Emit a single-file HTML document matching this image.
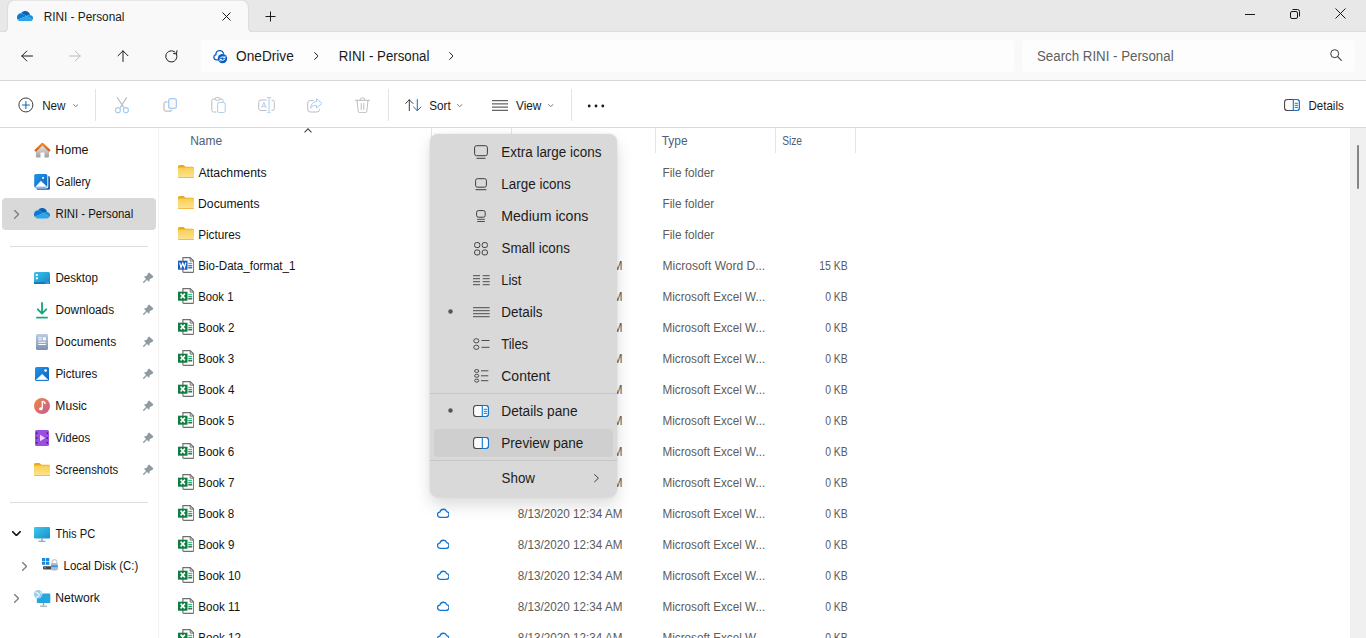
<!DOCTYPE html>
<html lang="en"><head><meta charset="utf-8"><title>RINI - Personal</title>
<style>
html,body{margin:0;padding:0;}
body{width:1366px;height:638px;overflow:hidden;position:relative;background:#fff;font-family:"Liberation Sans", sans-serif;}
#app{position:absolute;left:0;top:0;width:1366px;height:638px;overflow:hidden;}
#app div,#app svg,#app span{position:absolute;display:block;}
#app span{white-space:pre;line-height:20px;height:20px;transform-origin:0 50%;}
</style></head><body><div id="app">
<div style="left:0px;top:0px;width:1366px;height:32px;background:#e8e8e8;"></div>
<div style="left:0px;top:31px;width:1366px;height:1px;background:#dddddd;"></div>
<div style="left:0px;top:32px;width:1366px;height:48px;background:#f9f9f9;"></div>
<div style="left:0px;top:80px;width:1366px;height:1px;background:#d6d6d6;"></div>
<div style="left:0px;top:81px;width:1366px;height:46px;background:#ffffff;"></div>
<div style="left:0px;top:127px;width:1366px;height:1px;background:#d9d9d9;"></div>
<svg style="left:0px;top:0px;" width="260" height="32" viewBox="0 0 260 32" preserveAspectRatio="none" fill="none"><path d="M4 32Q8 32 8 28L8 8Q8 0.500 16 0.500L240 0.500Q248 0.500 248 8L248 28Q248 32 252 32Z" fill="#f9f9f9"/><path d="M3.500 31.500Q7.500 31.500 7.500 27.500L7.500 8Q7.500 0 16 0L240 0Q248.500 0 248.500 8L248.500 27.500Q248.500 31.500 252.500 31.500" stroke="#dddddd" stroke-width="1" fill="none"/></svg>
<div style="left:201px;top:40px;width:813px;height:32px;background:#fdfdfd;border-radius:4px;"></div>
<div style="left:1022px;top:40px;width:333px;height:32px;background:#fdfdfd;border-radius:4px;"></div>
<div style="left:158px;top:128px;width:1px;height:510px;background:#f3f3f3;"></div>
<div style="left:1350px;top:128px;width:16px;height:510px;background:#f0f0f0;"></div>
<div style="left:1357px;top:145px;width:2px;height:44px;background:#858585;border-radius:1px;"></div>
<svg style="left:17px;top:10.6px;" width="16" height="10.6" viewBox="0 5.5 32 20.5" preserveAspectRatio="none" fill="none"><path d="M12.202 11.193l6.719 4.024 4.003-1.685A6.477 6.477 0 0125.5 13c.148 0 .294.007.439.016a10 10 0 00-18.041-3.013L8 10a7.960 7.960 0 014.202 1.193z" fill="#0364b8"/>
<path d="M12.203 11.192A7.960 7.960 0 008 10l-.102.003a7.997 7.997 0 00-6.460 12.570L7.360 20.080l2.634-1.108 5.863-2.468 3.062-1.288z" fill="#0f78d4"/>
<path d="M25.939 13.016A6.577 6.577 0 0025.500 13a6.477 6.477 0 00-2.576.532l-4.003 1.684 1.161.695 3.805 2.279 1.660.994 5.677 3.400a6.500 6.500 0 00-5.285-9.568z" fill="#1490df"/>
<path d="M25.546 19.184l-1.660-.994-3.805-2.280-1.160-.694-3.063 1.288-5.863 2.468L7.360 20.080l-5.924 2.493A7.989 7.989 0 008 26h17.500a6.498 6.498 0 005.723-3.416z" fill="#28a8ea"/></svg>
<span style="left:43px;top:6.75px;font-size:12px;color:#1a1a1a;transform:translateX(0.63px) scaleX(0.9857);opacity:.999;">RINI - Personal</span>
<svg style="left:222px;top:12px;" width="9" height="9" viewBox="0 0 9 9" preserveAspectRatio="none" fill="none"><path d="M0.5 0.5L8.5 8.5M8.5 0.5L0.5 8.5" stroke="#1a1a1a" stroke-width="1"/></svg>
<svg style="left:265px;top:11px;" width="11" height="11" viewBox="0 0 11 11" preserveAspectRatio="none" fill="none"><path d="M5.5 0.5V10.500M0.500 5.500H10.500" stroke="#1a1a1a" stroke-width="1"/></svg>
<div style="left:1245px;top:14px;width:10px;height:1px;background:#1a1a1a;"></div>
<svg style="left:1290px;top:9px;" width="10" height="10" viewBox="0 0 10 10" preserveAspectRatio="none" fill="none"><rect x="0.5" y="2.500" width="7" height="7" rx="1.500" stroke="#1a1a1a"/><path d="M2.500 0.500H7.500A2 2 0 0 1 9.500 2.500V7.500" stroke="#1a1a1a"/></svg>
<svg style="left:1335px;top:7.8px;" width="11" height="11" viewBox="0 0 11 11" preserveAspectRatio="none" fill="none"><path d="M0.500 0.500L10.500 10.500M10.500 0.500L0.500 10.500" stroke="#1a1a1a" stroke-width="1"/></svg>
<svg style="left:21px;top:50px;" width="12" height="12" viewBox="0 0 12 12" preserveAspectRatio="none" fill="none"><path d="M11.500 6H0.800M5.800 1L0.800 6L5.800 11" stroke="#1a1a1a" stroke-width="1" stroke-linecap="round" stroke-linejoin="round"/></svg>
<svg style="left:69px;top:50px;" width="12" height="12" viewBox="0 0 12 12" preserveAspectRatio="none" fill="none"><path d="M0.500 6H11.200M6.200 1L11.200 6L6.200 11" stroke="#bcbcbc" stroke-width="1" stroke-linecap="round" stroke-linejoin="round"/></svg>
<svg style="left:116.5px;top:50px;" width="12" height="12" viewBox="0 0 12 12" preserveAspectRatio="none" fill="none"><path d="M6 11.500V0.800M1 5.800L6 0.800L11 5.800" stroke="#1a1a1a" stroke-width="1" stroke-linecap="round" stroke-linejoin="round"/></svg>
<svg style="left:164.5px;top:49.5px;" width="13" height="13" viewBox="0 0 13 13" preserveAspectRatio="none" fill="none"><path d="M11.400 3.900A5.600 5.600 0 1 1 10 2.100" stroke="#1a1a1a" stroke-width="1" stroke-linecap="round"/><path d="M12 0.700L11.500 3.900L8.500 3.600" stroke="#1a1a1a" stroke-width="1" stroke-linecap="round" stroke-linejoin="round"/></svg>
<svg style="left:213px;top:49.5px;" width="15" height="14" viewBox="0 0 15 14" preserveAspectRatio="none" fill="none"><path d="M4.600 9.900H3.400A2.700 2.700 0 0 1 2.900 4.600A3.900 3.900 0 0 1 10.500 3.300" stroke="#0f5fc0" stroke-width="1.300" stroke-linecap="round"/>
<circle cx="9.500" cy="8.600" r="4.700" fill="#0a5cc0"/>
<path d="M7 8.200C8 6.600 10.300 6.300 11.700 7.600M12 9C11 10.600 8.700 10.900 7.300 9.600" stroke="#fff" stroke-width="1" stroke-linecap="round"/><path d="M12 6.200V7.800H10.400M7 11V9.400H8.600" stroke="#fff" stroke-width="0.900" stroke-linecap="round" stroke-linejoin="round"/></svg>
<span style="left:236px;top:45.75px;font-size:14px;color:#1a1a1a;transform:translateX(0.05px) scaleX(0.9766);opacity:.999;">OneDrive</span>
<svg style="left:313.7px;top:52.2px;" width="4.8" height="8" viewBox="0 0 4.8 8" preserveAspectRatio="none" fill="none"><path d="M0.600 0.600L4.2 4.0L0.600 7.4" stroke="#1a1a1a" stroke-width="1" stroke-linecap="round" stroke-linejoin="round"/></svg>
<span style="left:338px;top:45.75px;font-size:14px;color:#1a1a1a;transform:translateX(0.71px) scaleX(0.9475);opacity:.999;">RINI - Personal</span>
<svg style="left:448.7px;top:52.2px;" width="4.8" height="8" viewBox="0 0 4.8 8" preserveAspectRatio="none" fill="none"><path d="M0.600 0.600L4.2 4.0L0.600 7.4" stroke="#1a1a1a" stroke-width="1" stroke-linecap="round" stroke-linejoin="round"/></svg>
<span style="left:1036px;top:46.00px;font-size:14px;color:#5f5f5f;transform:translateX(1.00px) scaleX(0.9489);opacity:.999;">Search RINI - Personal</span>
<svg style="left:1330px;top:49.4px;" width="12" height="12" viewBox="0 0 12 12" preserveAspectRatio="none" fill="none"><circle cx="4.700" cy="4.700" r="4" stroke="#3a3a3a" stroke-width="1"/><path d="M7.700 7.700L11.300 11.300" stroke="#3a3a3a" stroke-width="1.100" stroke-linecap="round"/></svg>
<svg style="left:17.5px;top:96.5px;" width="16" height="16" viewBox="0 0 16 16" preserveAspectRatio="none" fill="none"><circle cx="7.900" cy="7.950" r="7" stroke="#3d3d3d" stroke-width="1"/><path d="M7.900 4.500V11.400M4.450 7.950H11.350" stroke="#0f6cbd" stroke-width="1.100" stroke-linecap="round"/></svg>
<span style="left:42px;top:95.75px;font-size:12px;color:#1a1a1a;transform:translateX(0.14px) scaleX(0.9714);opacity:.999;">New</span>
<svg style="left:72.5px;top:103.6px;" width="5.6" height="3.2" viewBox="0 0 5.6 3.2" preserveAspectRatio="none" fill="none"><path d="M0.600 0.600L2.8 2.6L5.0 0.600" stroke="#6a6a6a" stroke-width="0.9" stroke-linecap="round" stroke-linejoin="round"/></svg>
<div style="left:95px;top:89px;width:1px;height:31.5px;background:#e3e3e3;"></div>
<svg style="left:115px;top:96.5px;" width="14" height="17" viewBox="0 0 14 17" preserveAspectRatio="none" fill="none"><path d="M2.100 0.400L9.100 10.900M11.700 0.400L5.100 10.900" stroke="#bdbdbd" stroke-width="1.100"/><circle cx="2.900" cy="13.200" r="2.500" stroke="#a6cdf0" stroke-width="1.200"/><circle cx="10.900" cy="13.200" r="2.500" stroke="#a6cdf0" stroke-width="1.200"/></svg>
<svg style="left:163px;top:98px;" width="14" height="14" viewBox="0 0 14 14" preserveAspectRatio="none" fill="none"><path d="M4.500 3.800H3.200A2.200 2.200 0 0 0 1 6V11A2.200 2.200 0 0 0 3.200 13.200H7A2.200 2.200 0 0 0 9 11.800" stroke="#bdbdbd" stroke-width="1.200"/><rect x="5.700" y="0.700" width="7.700" height="9.700" rx="2" fill="#f8f8f8" stroke="#a6cdf0" stroke-width="1.300"/></svg>
<svg style="left:210.5px;top:96.5px;" width="15" height="16.5" viewBox="0 0 15 16.5" preserveAspectRatio="none" fill="none"><path d="M5.500 15H2.500A1.700 1.700 0 0 1 0.800 13.300V3.700A1.700 1.700 0 0 1 2.500 2H4M9 2H10.500A1.700 1.700 0 0 1 12.200 3.700V4.800" stroke="#bdbdbd" stroke-width="1"/><rect x="4" y="0.600" width="5" height="2.600" rx="1.200" stroke="#bdbdbd" stroke-width="1"/><rect x="6.600" y="5.500" width="7.600" height="10" rx="1.700" stroke="#a6cdf0" stroke-width="1"/></svg>
<svg style="left:257.5px;top:96.5px;" width="17" height="16.5" viewBox="0 0 17 16.5" preserveAspectRatio="none" fill="none"><path d="M8.500 3H3A2.300 2.300 0 0 0 0.700 5.300V11.200A2.300 2.300 0 0 0 3 13.500H8.500M13.500 3H14A2.300 2.300 0 0 1 16.300 5.300V11.200A2.300 2.300 0 0 1 14 13.500H13.500" stroke="#bdbdbd" stroke-width="1"/><path d="M11 0.800V15.700M9 0.600H13M9 15.900H13" stroke="#a6cdf0" stroke-width="1"/><path d="M3.600 11L5.900 5.300L8.200 11M4.400 9.200H7.400" stroke="#a6cdf0" stroke-width="0.900" stroke-linejoin="round"/></svg>
<svg style="left:306.5px;top:97.5px;" width="16" height="15" viewBox="0 0 16 15" preserveAspectRatio="none" fill="none"><path d="M6.500 2.500H3.200A2.500 2.500 0 0 0 0.700 5V11.500A2.500 2.500 0 0 0 3.200 14H10A2.500 2.500 0 0 0 12.500 11.500V11" stroke="#bdbdbd" stroke-width="1"/><path d="M9.500 0.800L15 5.400L9.500 10V7.400C6.500 7.200 4.800 8.200 3.600 10.200C3.800 6.500 5.800 3.900 9.500 3.500Z" stroke="#a6cdf0" stroke-width="1" stroke-linejoin="round"/></svg>
<svg style="left:354.5px;top:96.5px;" width="15" height="16.5" viewBox="0 0 15 16.5" preserveAspectRatio="none" fill="none"><path d="M0.500 3.300H14.500M5 3.300A2.500 2.500 0 0 1 10 3.300M2 3.300L3.200 14.200A1.700 1.700 0 0 0 4.900 15.700H10.100A1.700 1.700 0 0 0 11.800 14.200L13 3.300M6.200 6.500V12.500M8.800 6.500V12.500" stroke="#bdbdbd" stroke-width="1" stroke-linecap="round"/></svg>
<div style="left:388px;top:89px;width:1px;height:31.5px;background:#e3e3e3;"></div>
<svg style="left:404.5px;top:98.5px;" width="17" height="12.5" viewBox="0 0 17 12.5" preserveAspectRatio="none" fill="none"><path d="M4.300 12V0.800M0.600 4.500L4.300 0.800L8 4.500" stroke="#3d3d3d" stroke-width="1" stroke-linecap="round" stroke-linejoin="round"/><path d="M12.300 0.500V11.700M8.600 8L12.300 11.700L16 8" stroke="#0f6cbd" stroke-width="1" stroke-linecap="round" stroke-linejoin="round"/></svg>
<span style="left:429px;top:95.50px;font-size:12px;color:#1a1a1a;transform:translateX(0.17px) scaleX(0.9774);opacity:.999;">Sort</span>
<svg style="left:457px;top:103.6px;" width="5.6" height="3.2" viewBox="0 0 5.6 3.2" preserveAspectRatio="none" fill="none"><path d="M0.600 0.600L2.8 2.6L5.0 0.600" stroke="#6a6a6a" stroke-width="0.9" stroke-linecap="round" stroke-linejoin="round"/></svg>
<svg style="left:492px;top:99.5px;" width="16" height="11" viewBox="0 0 16 11" preserveAspectRatio="none" fill="none"><path d="M0 0.700H16M0 3.900H16M0 7.100H16M0 10.300H16" stroke="#3d3d3d" stroke-width="1"/></svg>
<span style="left:516px;top:95.50px;font-size:12px;color:#1a1a1a;transform:translateX(0.05px) scaleX(0.9816);opacity:.999;">View</span>
<svg style="left:548px;top:103.6px;" width="5.6" height="3.2" viewBox="0 0 5.6 3.2" preserveAspectRatio="none" fill="none"><path d="M0.600 0.600L2.8 2.6L5.0 0.600" stroke="#6a6a6a" stroke-width="0.9" stroke-linecap="round" stroke-linejoin="round"/></svg>
<div style="left:571px;top:89px;width:1px;height:31.5px;background:#e3e3e3;"></div>
<svg style="left:587px;top:104px;" width="18" height="4" viewBox="0 0 18 4" preserveAspectRatio="none" fill="none"><circle cx="2.200" cy="2" r="1.400" fill="#1a1a1a"/><circle cx="9" cy="2" r="1.400" fill="#1a1a1a"/><circle cx="15.800" cy="2" r="1.400" fill="#1a1a1a"/></svg>
<svg style="left:1284px;top:99px;" width="16" height="12" viewBox="0 0 16 12" preserveAspectRatio="none" fill="none"><rect x="0.550" y="0.550" width="14.900" height="10.900" rx="2.800" fill="#fbfbfb" stroke="#4a4a4a" stroke-width="1.100"/><path d="M9.300 0.550H12.650A2.800 2.800 0 0 1 15.450 3.350V8.650A2.800 2.800 0 0 1 12.650 11.450H9.300Z" fill="#fdfdfd" stroke="#0f78d4" stroke-width="1.100"/><path d="M11.100 4.300H13.900M11.100 6.350H13.900M11.100 8.400H13.900" stroke="#0f78d4" stroke-width="0.950" stroke-linecap="round"/></svg>
<span style="left:1308px;top:96.00px;font-size:12px;color:#1a1a1a;transform:translateX(0.45px) scaleX(0.9612);opacity:.999;">Details</span>
<div style="left:2px;top:198px;width:154px;height:32px;background:#d9d9d9;border-radius:4px;"></div>
<div style="left:10px;top:246px;width:138px;height:1px;background:#dcdcdc;"></div>
<div style="left:10px;top:502px;width:138px;height:1px;background:#dcdcdc;"></div>
<span style="left:55px;top:139.75px;font-size:12px;color:#141414;transform:translateX(0.33px) scaleX(1.0378);">Home</span>
<span style="left:55px;top:171.75px;font-size:12px;color:#141414;transform:translateX(0.80px) scaleX(0.9161);">Gallery</span>
<span style="left:55px;top:203.75px;font-size:12px;color:#141414;transform:translateX(0.42px) scaleX(0.9477);">RINI - Personal</span>
<span style="left:55px;top:267.75px;font-size:12px;color:#141414;transform:translateX(0.40px) scaleX(0.9649);">Desktop</span>
<span style="left:55px;top:299.75px;font-size:12px;color:#141414;transform:translateX(0.38px) scaleX(0.9895);">Downloads</span>
<span style="left:55px;top:331.75px;font-size:12px;color:#141414;transform:translateX(0.36px) scaleX(1.0028);">Documents</span>
<span style="left:55px;top:363.75px;font-size:12px;color:#141414;transform:translateX(0.40px) scaleX(0.9644);">Pictures</span>
<span style="left:55px;top:395.75px;font-size:12px;color:#141414;transform:translateX(0.36px) scaleX(1.0069);">Music</span>
<span style="left:55px;top:427.75px;font-size:12px;color:#141414;transform:translateX(0.35px) scaleX(0.9528);">Videos</span>
<span style="left:55px;top:459.75px;font-size:12px;color:#141414;transform:translateX(0.24px) scaleX(0.9441);">Screenshots</span>
<span style="left:55px;top:523.75px;font-size:12px;color:#141414;transform:translateX(0.45px) scaleX(0.9318);">This PC</span>
<span style="left:63px;top:555.75px;font-size:12px;color:#141414;transform:translateX(0.62px) scaleX(0.9492);">Local Disk (C:)</span>
<span style="left:55px;top:587.75px;font-size:12px;color:#141414;transform:translateX(0.35px) scaleX(1.0116);">Network</span>
<svg style="left:14px;top:210.3px;" width="5.2" height="8.8" viewBox="0 0 5.2 8.8" preserveAspectRatio="none" fill="none"><path d="M0.600 0.600L4.6000000000000005 4.4L0.600 8.200000000000001" stroke="#808080" stroke-width="1.4" stroke-linecap="round" stroke-linejoin="round"/></svg>
<svg style="left:12.2px;top:531px;" width="8.8" height="5.2" viewBox="0 0 8.8 5.2" preserveAspectRatio="none" fill="none"><path d="M0.600 0.600L4.4 4.6000000000000005L8.200000000000001 0.600" stroke="#1a1a1a" stroke-width="1.6" stroke-linecap="round" stroke-linejoin="round"/></svg>
<svg style="left:22px;top:562.2px;" width="5.2" height="8.8" viewBox="0 0 5.2 8.8" preserveAspectRatio="none" fill="none"><path d="M0.600 0.600L4.6000000000000005 4.4L0.600 8.200000000000001" stroke="#808080" stroke-width="1.4" stroke-linecap="round" stroke-linejoin="round"/></svg>
<svg style="left:14px;top:593.8px;" width="5.2" height="8.8" viewBox="0 0 5.2 8.8" preserveAspectRatio="none" fill="none"><path d="M0.600 0.600L4.6000000000000005 4.4L0.600 8.200000000000001" stroke="#808080" stroke-width="1.4" stroke-linecap="round" stroke-linejoin="round"/></svg>
<svg style="left:142.5px;top:271.75px;" width="11" height="11" viewBox="0 0 11 11" preserveAspectRatio="none" fill="none"><path d="M6.200 0.500L10.500 4.600L9.200 5.900L6.900 7L6 9.900L0.900 4.800L3.900 3.700L4.900 1.600Z" fill="#8f9aa2"/><path d="M3.700 7.300L0.700 10.300" stroke="#8f9aa2" stroke-width="1.300" stroke-linecap="round"/></svg>
<svg style="left:142.5px;top:303.75px;" width="11" height="11" viewBox="0 0 11 11" preserveAspectRatio="none" fill="none"><path d="M6.200 0.500L10.500 4.600L9.200 5.900L6.900 7L6 9.900L0.900 4.800L3.900 3.700L4.900 1.600Z" fill="#8f9aa2"/><path d="M3.700 7.300L0.700 10.300" stroke="#8f9aa2" stroke-width="1.300" stroke-linecap="round"/></svg>
<svg style="left:142.5px;top:335.75px;" width="11" height="11" viewBox="0 0 11 11" preserveAspectRatio="none" fill="none"><path d="M6.200 0.500L10.500 4.600L9.200 5.900L6.900 7L6 9.900L0.900 4.800L3.900 3.700L4.900 1.600Z" fill="#8f9aa2"/><path d="M3.700 7.300L0.700 10.300" stroke="#8f9aa2" stroke-width="1.300" stroke-linecap="round"/></svg>
<svg style="left:142.5px;top:367.75px;" width="11" height="11" viewBox="0 0 11 11" preserveAspectRatio="none" fill="none"><path d="M6.200 0.500L10.500 4.600L9.200 5.900L6.900 7L6 9.900L0.900 4.800L3.900 3.700L4.900 1.600Z" fill="#8f9aa2"/><path d="M3.700 7.300L0.700 10.300" stroke="#8f9aa2" stroke-width="1.300" stroke-linecap="round"/></svg>
<svg style="left:142.5px;top:399.75px;" width="11" height="11" viewBox="0 0 11 11" preserveAspectRatio="none" fill="none"><path d="M6.200 0.500L10.500 4.600L9.200 5.900L6.900 7L6 9.900L0.900 4.800L3.900 3.700L4.900 1.600Z" fill="#8f9aa2"/><path d="M3.700 7.300L0.700 10.300" stroke="#8f9aa2" stroke-width="1.300" stroke-linecap="round"/></svg>
<svg style="left:142.5px;top:431.75px;" width="11" height="11" viewBox="0 0 11 11" preserveAspectRatio="none" fill="none"><path d="M6.200 0.500L10.500 4.600L9.200 5.900L6.900 7L6 9.900L0.900 4.800L3.900 3.700L4.900 1.600Z" fill="#8f9aa2"/><path d="M3.700 7.300L0.700 10.300" stroke="#8f9aa2" stroke-width="1.300" stroke-linecap="round"/></svg>
<svg style="left:142.5px;top:463.75px;" width="11" height="11" viewBox="0 0 11 11" preserveAspectRatio="none" fill="none"><path d="M6.200 0.500L10.500 4.600L9.200 5.900L6.900 7L6 9.900L0.900 4.800L3.900 3.700L4.900 1.600Z" fill="#8f9aa2"/><path d="M3.700 7.300L0.700 10.300" stroke="#8f9aa2" stroke-width="1.300" stroke-linecap="round"/></svg>
<svg style="left:33.5px;top:142.3px;" width="17" height="16" viewBox="0 0 17 16" preserveAspectRatio="none" fill="none"><defs><linearGradient id="hg" x1="0" y1="0" x2="0" y2="1"><stop offset="0" stop-color="#ececec"/><stop offset="1" stop-color="#9f9f9f"/></linearGradient><linearGradient id="hr" x1="0" y1="0" x2="0" y2="1"><stop offset="0" stop-color="#f08a2a"/><stop offset="1" stop-color="#d9601a"/></linearGradient></defs><path d="M1.900 8.500L8.450 2.500L15 8.500V14.400A1 1 0 0 1 14 15.400H10.500V10.500H6.500V15.400H2.900A1 1 0 0 1 1.900 14.400Z" fill="url(#hg)"/><path d="M1.700 8.400L8.450 1.900L15.200 8.400" stroke="url(#hr)" stroke-width="2.300" stroke-linecap="round" stroke-linejoin="round"/></svg>
<svg style="left:33.8px;top:174px;" width="16" height="16" viewBox="0 0 16 16" preserveAspectRatio="none" fill="none"><defs><linearGradient id="gg" x1="0" y1="0" x2="1" y2="1"><stop offset="0" stop-color="#2196e8"/><stop offset="1" stop-color="#0e66c6"/></linearGradient></defs><rect x="2.300" y="1.900" width="13.650" height="13.850" rx="1.600" fill="#1259b3"/><rect x="0.200" y="0" width="14.100" height="14.600" rx="1.800" fill="#f4f9fe"/><rect x="0.200" y="0" width="13.100" height="13.600" rx="1.600" fill="url(#gg)"/><rect x="8.200" y="3" width="1.800" height="1.800" rx="0.300" fill="#fff"/><path d="M6.900 7L13 12.700H1.700Z" fill="#fff" stroke="#fff" stroke-width="0.300" stroke-linejoin="round"/></svg>
<svg style="left:33.9px;top:208.4px;" width="16" height="10.6" viewBox="0 5.5 32 20.5" preserveAspectRatio="none" fill="none"><path d="M12.202 11.193l6.719 4.024 4.003-1.685A6.477 6.477 0 0125.5 13c.148 0 .294.007.439.016a10 10 0 00-18.041-3.013L8 10a7.960 7.960 0 014.202 1.193z" fill="#0364b8"/>
<path d="M12.203 11.192A7.960 7.960 0 008 10l-.102.003a7.997 7.997 0 00-6.460 12.570L7.360 20.080l2.634-1.108 5.863-2.468 3.062-1.288z" fill="#0f78d4"/>
<path d="M25.939 13.016A6.577 6.577 0 0025.500 13a6.477 6.477 0 00-2.576.532l-4.003 1.684 1.161.695 3.805 2.279 1.660.994 5.677 3.400a6.500 6.500 0 00-5.285-9.568z" fill="#1490df"/>
<path d="M25.546 19.184l-1.660-.994-3.805-2.280-1.160-.694-3.063 1.288-5.863 2.468L7.360 20.080l-5.924 2.493A7.989 7.989 0 008 26h17.500a6.498 6.498 0 005.723-3.416z" fill="#28a8ea"/></svg>
<svg style="left:34px;top:272px;" width="16" height="12" viewBox="0 0 16 12" preserveAspectRatio="none" fill="none"><defs><linearGradient id="dg" x1="0" y1="0" x2="1" y2="1"><stop offset="0" stop-color="#3bc4e8"/><stop offset="1" stop-color="#1583c9"/></linearGradient></defs><rect x="0" y="0" width="16" height="12" rx="1.500" fill="url(#dg)"/><rect x="0" y="10.300" width="16" height="1.700" fill="#1173b8"/><rect x="1.800" y="2" width="2" height="2" fill="#fff"/><rect x="1.800" y="5.300" width="2" height="2" fill="#fff"/><path d="M11.500 11H15" stroke="#fff" stroke-width="0.800" stroke-dasharray="0.800 0.600"/></svg>
<svg style="left:36px;top:301.5px;" width="12" height="17" viewBox="0 0 12 17" preserveAspectRatio="none" fill="none"><path d="M6 0.900V11.300M1.800 7.300L6 11.600L10.200 7.300" stroke="#15a67a" stroke-width="1.800" stroke-linecap="round" stroke-linejoin="round"/><path d="M0.200 15.600H11.800" stroke="#15a67a" stroke-width="1.700"/></svg>
<svg style="left:36px;top:333.8px;" width="12" height="16" viewBox="0 0 12 16" preserveAspectRatio="none" fill="none"><defs><linearGradient id="dcg" x1="0" y1="0" x2="0" y2="1"><stop offset="0" stop-color="#bccbe0"/><stop offset="1" stop-color="#7b90b2"/></linearGradient></defs><rect x="0" y="0" width="12" height="16" rx="1.500" fill="url(#dcg)"/><rect x="6.800" y="3.300" width="3" height="3" fill="#fff"/><path d="M2.200 3.800H5.800M2.200 5.800H5.800M2.200 8.300H9.800M2.200 10.500H9.800" stroke="#fff" stroke-width="1.100"/></svg>
<svg style="left:35px;top:367px;" width="14" height="14" viewBox="0 0 14 14" preserveAspectRatio="none" fill="none"><defs><linearGradient id="pcg" x1="0" y1="0" x2="1" y2="1"><stop offset="0" stop-color="#1f96e6"/><stop offset="1" stop-color="#0b62c4"/></linearGradient></defs><rect x="0" y="0" width="14" height="14" rx="1.600" fill="url(#pcg)"/><circle cx="10.600" cy="3.500" r="1.300" fill="#fff"/><path d="M7.200 7.200L13 12.700H1.200Z" fill="#fff" stroke="#fff" stroke-width="0.400" stroke-linejoin="round"/></svg>
<svg style="left:34px;top:398px;" width="16" height="16" viewBox="0 0 16 16" preserveAspectRatio="none" fill="none"><defs><linearGradient id="mg" x1="0" y1="0" x2="1" y2="1"><stop offset="0" stop-color="#ee8a3c"/><stop offset="1" stop-color="#c7589a"/></linearGradient></defs><circle cx="8" cy="8" r="8" fill="url(#mg)"/><path d="M8.300 3.500V10.300" stroke="#fff" stroke-width="1.300"/><path d="M8.300 3.500C9.500 3.500 10.800 4 11 5.500" stroke="#fff" stroke-width="1.400" stroke-linecap="round"/><ellipse cx="6.900" cy="10.700" rx="1.900" ry="1.500" fill="#fff"/></svg>
<svg style="left:35px;top:430px;" width="14" height="16" viewBox="0 0 14 16" preserveAspectRatio="none" fill="none"><rect x="0" y="0" width="14" height="16" rx="1.500" fill="#9b4fe0"/><path d="M1.700 2.500V4M1.700 7.200V8.800M1.700 12V13.500M12.300 2.500V4M12.300 7.200V8.800M12.300 12V13.500" stroke="#3a1a6e" stroke-width="1.400"/><path d="M5 4.800L10.300 8L5 11.200Z" fill="#e7d6fb"/></svg>
<svg style="left:34px;top:463px;" width="16" height="13" viewBox="0 0 16 13" preserveAspectRatio="none" fill="none"><defs><linearGradient id="fg" x1="0" y1="0" x2="0" y2="1"><stop offset="0" stop-color="#f9cf55"/><stop offset="1" stop-color="#fde394"/></linearGradient></defs><path d="M0 1.500A1.500 1.500 0 0 1 1.500 0H5.500L7.500 1.800H14.500A1.500 1.500 0 0 1 16 3.300V5H0Z" fill="#eaa91f"/><rect x="0" y="2.600" width="16" height="10.400" rx="1.200" fill="url(#fg)"/><rect x="0" y="12" width="16" height="1" rx="0.500" fill="#f0bd45"/></svg>
<svg style="left:34px;top:526.5px;" width="16" height="15" viewBox="0 0 16 15" preserveAspectRatio="none" fill="none"><defs><linearGradient id="pg" x1="0" y1="0" x2="1" y2="1"><stop offset="0" stop-color="#40c8ea"/><stop offset="1" stop-color="#1890d0"/></linearGradient></defs><rect x="0" y="0" width="16" height="11.500" rx="1.200" fill="url(#pg)"/><path d="M8 11.500V14" stroke="#9aa3ab" stroke-width="1.600"/><path d="M4.500 14.300H11.500" stroke="#9aa3ab" stroke-width="1.200"/></svg>
<svg style="left:41.6px;top:558px;" width="17" height="13" viewBox="0 0 17 13" preserveAspectRatio="none" fill="none"><rect x="0" y="0" width="3.300" height="3.100" fill="#1a86dc"/><rect x="4" y="0" width="3.300" height="3.100" fill="#1a86dc"/><rect x="0" y="3.700" width="3.300" height="3.100" fill="#1a86dc"/><rect x="4" y="3.700" width="3.300" height="3.100" fill="#1a86dc"/><rect x="1" y="8.200" width="14.500" height="3.200" rx="0.800" fill="#444"/><rect x="2.300" y="9.300" width="1.500" height="1" fill="#5fe06a"/><path d="M10.200 5.500V4A2.300 2.300 0 0 1 14.800 4V5" stroke="#c3ccd6" stroke-width="1.200"/><rect x="9" y="5" width="6.800" height="7.300" rx="1" fill="#aebdcb"/><rect x="9" y="7.300" width="6.800" height="1.800" fill="#3b94dd"/><rect x="11" y="12.200" width="2.800" height="0.800" fill="#c9d3dc"/></svg>
<svg style="left:33.8px;top:589.8px;" width="17" height="17" viewBox="0 0 17 17" preserveAspectRatio="none" fill="none"><rect x="2.800" y="3.600" width="13.500" height="9.300" rx="1" fill="#27a5dd"/><path d="M9.500 12.900V15.600" stroke="#9aa3ab" stroke-width="1.500"/><path d="M6 16.200H13" stroke="#9aa3ab" stroke-width="1.100"/><circle cx="4.200" cy="4.300" r="4.200" fill="#8fd0f2"/><path d="M1.500 2.500C3 2 3.500 3.500 4.500 3.800C5.800 4.200 5.200 6 4 6.300C3 6.600 2.500 7.500 3.300 8" stroke="#e8f6fd" stroke-width="1.400" fill="none"/><path d="M6 1.800C6.800 2.500 7.500 3 7.600 4.200" stroke="#e8f6fd" stroke-width="1" fill="none"/></svg>
<div style="left:431px;top:128px;width:1px;height:25px;background:#e5e5e5;"></div>
<div style="left:511px;top:128px;width:1px;height:25px;background:#e5e5e5;"></div>
<div style="left:655px;top:128px;width:1px;height:25px;background:#e5e5e5;"></div>
<div style="left:775px;top:128px;width:1px;height:25px;background:#e5e5e5;"></div>
<div style="left:855px;top:128px;width:1px;height:25px;background:#e5e5e5;"></div>
<span style="left:190px;top:130.75px;font-size:12px;color:#4c607a;transform:translateX(0.22px) scaleX(0.9968);">Name</span>
<span style="left:437px;top:130.75px;font-size:12px;color:#4c607a;transform:translateX(0.46px) scaleX(0.9984);">Status</span>
<span style="left:517px;top:130.75px;font-size:12px;color:#4c607a;transform:translateX(0.32px) scaleX(0.9960);">Date modified</span>
<span style="left:661px;top:130.75px;font-size:12px;color:#4c607a;transform:translateX(0.73px) scaleX(0.9916);">Type</span>
<span style="left:782px;top:130.75px;font-size:12px;color:#4c607a;transform:translateX(0.13px) scaleX(0.8533);">Size</span>
<svg style="left:304px;top:127.5px;" width="8" height="5" viewBox="0 0 8 5" preserveAspectRatio="none" fill="none"><path d="M0.500 4.400L4 0.800L7.500 4.400" stroke="#444" stroke-width="1.100"/></svg>
<svg style="left:178px;top:165px;" width="16" height="13" viewBox="0 0 16 13" preserveAspectRatio="none" fill="none"><defs><linearGradient id="fg" x1="0" y1="0" x2="0" y2="1"><stop offset="0" stop-color="#f9cf55"/><stop offset="1" stop-color="#fde394"/></linearGradient></defs><path d="M0 1.500A1.500 1.500 0 0 1 1.500 0H5.500L7.500 1.800H14.500A1.500 1.500 0 0 1 16 3.300V5H0Z" fill="#eaa91f"/><rect x="0" y="2.600" width="16" height="10.400" rx="1.200" fill="url(#fg)"/><rect x="0" y="12" width="16" height="1" rx="0.500" fill="#f0bd45"/></svg>
<span style="left:662px;top:162.75px;font-size:12px;color:#5c5c5c;transform:translateX(0.53px) scaleX(0.9805);">File folder</span>
<svg style="left:437px;top:167.3px;" width="12.4" height="10" viewBox="0 0 12.4 10" preserveAspectRatio="none" fill="none"><path d="M3.300 9.300A2.600 2.600 0 0 1 2.900 4.100A3.600 3.600 0 0 1 9.800 3.600A2.900 2.900 0 0 1 9.400 9.300Z" stroke="#1177d3" stroke-width="1.300" stroke-linejoin="round"/></svg>
<span style="left:198px;top:162.75px;font-size:12px;color:#141414;transform:translateX(0.38px) scaleX(1.0219);">Attachments</span>
<svg style="left:178px;top:196px;" width="16" height="13" viewBox="0 0 16 13" preserveAspectRatio="none" fill="none"><defs><linearGradient id="fg" x1="0" y1="0" x2="0" y2="1"><stop offset="0" stop-color="#f9cf55"/><stop offset="1" stop-color="#fde394"/></linearGradient></defs><path d="M0 1.500A1.500 1.500 0 0 1 1.500 0H5.500L7.500 1.800H14.500A1.500 1.500 0 0 1 16 3.300V5H0Z" fill="#eaa91f"/><rect x="0" y="2.600" width="16" height="10.400" rx="1.200" fill="url(#fg)"/><rect x="0" y="12" width="16" height="1" rx="0.500" fill="#f0bd45"/></svg>
<span style="left:662px;top:193.75px;font-size:12px;color:#5c5c5c;transform:translateX(0.53px) scaleX(0.9805);">File folder</span>
<svg style="left:437px;top:198.3px;" width="12.4" height="10" viewBox="0 0 12.4 10" preserveAspectRatio="none" fill="none"><path d="M3.300 9.300A2.600 2.600 0 0 1 2.900 4.100A3.600 3.600 0 0 1 9.800 3.600A2.900 2.900 0 0 1 9.400 9.300Z" stroke="#1177d3" stroke-width="1.300" stroke-linejoin="round"/></svg>
<span style="left:198px;top:193.75px;font-size:12px;color:#141414;transform:translateX(0.10px) scaleX(1.0121);">Documents</span>
<svg style="left:178px;top:227px;" width="16" height="13" viewBox="0 0 16 13" preserveAspectRatio="none" fill="none"><defs><linearGradient id="fg" x1="0" y1="0" x2="0" y2="1"><stop offset="0" stop-color="#f9cf55"/><stop offset="1" stop-color="#fde394"/></linearGradient></defs><path d="M0 1.500A1.500 1.500 0 0 1 1.500 0H5.500L7.500 1.800H14.500A1.500 1.500 0 0 1 16 3.300V5H0Z" fill="#eaa91f"/><rect x="0" y="2.600" width="16" height="10.400" rx="1.200" fill="url(#fg)"/><rect x="0" y="12" width="16" height="1" rx="0.500" fill="#f0bd45"/></svg>
<span style="left:662px;top:224.75px;font-size:12px;color:#5c5c5c;transform:translateX(0.53px) scaleX(0.9805);">File folder</span>
<svg style="left:437px;top:229.3px;" width="12.4" height="10" viewBox="0 0 12.4 10" preserveAspectRatio="none" fill="none"><path d="M3.300 9.300A2.600 2.600 0 0 1 2.900 4.100A3.600 3.600 0 0 1 9.800 3.600A2.900 2.900 0 0 1 9.400 9.300Z" stroke="#1177d3" stroke-width="1.300" stroke-linejoin="round"/></svg>
<span style="left:198px;top:224.75px;font-size:12px;color:#141414;transform:translateX(0.13px) scaleX(0.9823);">Pictures</span>
<svg style="left:177.8px;top:256.9px;" width="16.4" height="16" viewBox="0 0 16.4 16" preserveAspectRatio="none" fill="none"><path d="M4.900 0.600H12.200L15.700 4.100V14.600A0.800 0.800 0 0 1 14.900 15.400H5.700A0.800 0.800 0 0 1 4.900 14.600Z" fill="#fdfdfd" stroke="#707070" stroke-width="1.150"/><path d="M12.200 0.600V4.100H15.700" stroke="#707070" stroke-width="1" fill="none"/><path d="M10.300 6.500H14.200" stroke="#41a5ee" stroke-width="1.300"/><path d="M10.300 8.700H14.200" stroke="#2b7cd3" stroke-width="1.300"/><path d="M10.300 10.800H14.200" stroke="#185abd" stroke-width="1.300"/><rect x="0" y="3.700" width="9.500" height="9" fill="#185abd"/><path d="M1.700 5.700L3 10.400L4.750 6.200L6.500 10.400L7.800 5.700" stroke="#fff" stroke-width="1.300" stroke-linejoin="miter"/></svg>
<span style="left:662px;top:255.75px;font-size:12px;color:#5c5c5c;transform:translateX(0.51px) scaleX(1.0021);">Microsoft Word D...</span>
<span style="left:819px;top:255.75px;font-size:12px;color:#5c5c5c;transform:translateX(0.30px) scaleX(0.8698);">15 KB</span>
<span style="left:517px;top:255.75px;font-size:12px;color:#5c5c5c;transform:translateX(0.79px) scaleX(0.9744);">8/13/2020 12:34 AM</span>
<svg style="left:437px;top:260.3px;" width="12.4" height="10" viewBox="0 0 12.4 10" preserveAspectRatio="none" fill="none"><path d="M3.300 9.300A2.600 2.600 0 0 1 2.900 4.100A3.600 3.600 0 0 1 9.800 3.600A2.900 2.900 0 0 1 9.400 9.300Z" stroke="#1177d3" stroke-width="1.300" stroke-linejoin="round"/></svg>
<span style="left:198px;top:255.75px;font-size:12px;color:#141414;transform:translateX(0.15px) scaleX(0.9662);">Bio-Data_format_1</span>
<svg style="left:177.8px;top:287.9px;" width="16.4" height="16" viewBox="0 0 16.4 16" preserveAspectRatio="none" fill="none"><path d="M4.900 0.600H12.200L15.700 4.100V14.600A0.800 0.800 0 0 1 14.900 15.400H5.700A0.800 0.800 0 0 1 4.900 14.600Z" fill="#fdfdfd" stroke="#707070" stroke-width="1.150"/><path d="M12.200 0.600V4.100H15.700" stroke="#707070" stroke-width="1" fill="none"/><path d="M10.300 6.500H14.200" stroke="#33c481" stroke-width="1.300"/><path d="M10.300 8.700H14.200" stroke="#21a366" stroke-width="1.300"/><path d="M10.300 10.800H14.200" stroke="#185c37" stroke-width="1.300"/><rect x="0" y="3.700" width="9.500" height="9" fill="#107c41"/><path d="M2.600 5.600L6.900 10.400M6.900 5.600L2.600 10.400" stroke="#fff" stroke-width="1.600"/></svg>
<span style="left:662px;top:286.75px;font-size:12px;color:#5c5c5c;transform:translateX(0.54px) scaleX(0.9741);">Microsoft Excel W...</span>
<span style="left:825px;top:286.75px;font-size:12px;color:#5c5c5c;transform:translateX(0.19px) scaleX(0.8670);">0 KB</span>
<span style="left:517px;top:286.75px;font-size:12px;color:#5c5c5c;transform:translateX(0.79px) scaleX(0.9744);">8/13/2020 12:34 AM</span>
<svg style="left:437px;top:291.3px;" width="12.4" height="10" viewBox="0 0 12.4 10" preserveAspectRatio="none" fill="none"><path d="M3.300 9.300A2.600 2.600 0 0 1 2.900 4.100A3.600 3.600 0 0 1 9.800 3.600A2.900 2.900 0 0 1 9.400 9.300Z" stroke="#1177d3" stroke-width="1.300" stroke-linejoin="round"/></svg>
<span style="left:198px;top:286.75px;font-size:12px;color:#141414;transform:translateX(0.17px) scaleX(0.9444);">Book 1</span>
<svg style="left:177.8px;top:318.9px;" width="16.4" height="16" viewBox="0 0 16.4 16" preserveAspectRatio="none" fill="none"><path d="M4.900 0.600H12.200L15.700 4.100V14.600A0.800 0.800 0 0 1 14.900 15.400H5.700A0.800 0.800 0 0 1 4.900 14.600Z" fill="#fdfdfd" stroke="#707070" stroke-width="1.150"/><path d="M12.200 0.600V4.100H15.700" stroke="#707070" stroke-width="1" fill="none"/><path d="M10.300 6.500H14.200" stroke="#33c481" stroke-width="1.300"/><path d="M10.300 8.700H14.200" stroke="#21a366" stroke-width="1.300"/><path d="M10.300 10.800H14.200" stroke="#185c37" stroke-width="1.300"/><rect x="0" y="3.700" width="9.500" height="9" fill="#107c41"/><path d="M2.600 5.600L6.900 10.400M6.900 5.600L2.600 10.400" stroke="#fff" stroke-width="1.600"/></svg>
<span style="left:662px;top:317.75px;font-size:12px;color:#5c5c5c;transform:translateX(0.54px) scaleX(0.9741);">Microsoft Excel W...</span>
<span style="left:825px;top:317.75px;font-size:12px;color:#5c5c5c;transform:translateX(0.19px) scaleX(0.8670);">0 KB</span>
<span style="left:517px;top:317.75px;font-size:12px;color:#5c5c5c;transform:translateX(0.79px) scaleX(0.9744);">8/13/2020 12:34 AM</span>
<svg style="left:437px;top:322.3px;" width="12.4" height="10" viewBox="0 0 12.4 10" preserveAspectRatio="none" fill="none"><path d="M3.300 9.300A2.600 2.600 0 0 1 2.900 4.100A3.600 3.600 0 0 1 9.800 3.600A2.900 2.900 0 0 1 9.400 9.300Z" stroke="#1177d3" stroke-width="1.300" stroke-linejoin="round"/></svg>
<span style="left:198px;top:317.75px;font-size:12px;color:#141414;transform:translateX(0.15px) scaleX(0.9700);">Book 2</span>
<svg style="left:177.8px;top:349.9px;" width="16.4" height="16" viewBox="0 0 16.4 16" preserveAspectRatio="none" fill="none"><path d="M4.900 0.600H12.200L15.700 4.100V14.600A0.800 0.800 0 0 1 14.900 15.400H5.700A0.800 0.800 0 0 1 4.900 14.600Z" fill="#fdfdfd" stroke="#707070" stroke-width="1.150"/><path d="M12.200 0.600V4.100H15.700" stroke="#707070" stroke-width="1" fill="none"/><path d="M10.300 6.500H14.200" stroke="#33c481" stroke-width="1.300"/><path d="M10.300 8.700H14.200" stroke="#21a366" stroke-width="1.300"/><path d="M10.300 10.800H14.200" stroke="#185c37" stroke-width="1.300"/><rect x="0" y="3.700" width="9.500" height="9" fill="#107c41"/><path d="M2.600 5.600L6.900 10.400M6.900 5.600L2.600 10.400" stroke="#fff" stroke-width="1.600"/></svg>
<span style="left:662px;top:348.75px;font-size:12px;color:#5c5c5c;transform:translateX(0.54px) scaleX(0.9741);">Microsoft Excel W...</span>
<span style="left:825px;top:348.75px;font-size:12px;color:#5c5c5c;transform:translateX(0.19px) scaleX(0.8670);">0 KB</span>
<span style="left:517px;top:348.75px;font-size:12px;color:#5c5c5c;transform:translateX(0.79px) scaleX(0.9744);">8/13/2020 12:34 AM</span>
<svg style="left:437px;top:353.3px;" width="12.4" height="10" viewBox="0 0 12.4 10" preserveAspectRatio="none" fill="none"><path d="M3.300 9.300A2.600 2.600 0 0 1 2.900 4.100A3.600 3.600 0 0 1 9.800 3.600A2.900 2.900 0 0 1 9.400 9.300Z" stroke="#1177d3" stroke-width="1.300" stroke-linejoin="round"/></svg>
<span style="left:198px;top:348.75px;font-size:12px;color:#141414;transform:translateX(0.15px) scaleX(0.9680);">Book 3</span>
<svg style="left:177.8px;top:380.9px;" width="16.4" height="16" viewBox="0 0 16.4 16" preserveAspectRatio="none" fill="none"><path d="M4.900 0.600H12.200L15.700 4.100V14.600A0.800 0.800 0 0 1 14.900 15.400H5.700A0.800 0.800 0 0 1 4.900 14.600Z" fill="#fdfdfd" stroke="#707070" stroke-width="1.150"/><path d="M12.200 0.600V4.100H15.700" stroke="#707070" stroke-width="1" fill="none"/><path d="M10.300 6.500H14.200" stroke="#33c481" stroke-width="1.300"/><path d="M10.300 8.700H14.200" stroke="#21a366" stroke-width="1.300"/><path d="M10.300 10.800H14.200" stroke="#185c37" stroke-width="1.300"/><rect x="0" y="3.700" width="9.500" height="9" fill="#107c41"/><path d="M2.600 5.600L6.900 10.400M6.900 5.600L2.600 10.400" stroke="#fff" stroke-width="1.600"/></svg>
<span style="left:662px;top:379.75px;font-size:12px;color:#5c5c5c;transform:translateX(0.54px) scaleX(0.9741);">Microsoft Excel W...</span>
<span style="left:825px;top:379.75px;font-size:12px;color:#5c5c5c;transform:translateX(0.19px) scaleX(0.8670);">0 KB</span>
<span style="left:517px;top:379.75px;font-size:12px;color:#5c5c5c;transform:translateX(0.79px) scaleX(0.9744);">8/13/2020 12:34 AM</span>
<svg style="left:437px;top:384.3px;" width="12.4" height="10" viewBox="0 0 12.4 10" preserveAspectRatio="none" fill="none"><path d="M3.300 9.300A2.600 2.600 0 0 1 2.900 4.100A3.600 3.600 0 0 1 9.800 3.600A2.900 2.900 0 0 1 9.400 9.300Z" stroke="#1177d3" stroke-width="1.300" stroke-linejoin="round"/></svg>
<span style="left:198px;top:379.75px;font-size:12px;color:#141414;transform:translateX(0.15px) scaleX(0.9688);">Book 4</span>
<svg style="left:177.8px;top:411.9px;" width="16.4" height="16" viewBox="0 0 16.4 16" preserveAspectRatio="none" fill="none"><path d="M4.900 0.600H12.200L15.700 4.100V14.600A0.800 0.800 0 0 1 14.900 15.400H5.700A0.800 0.800 0 0 1 4.900 14.600Z" fill="#fdfdfd" stroke="#707070" stroke-width="1.150"/><path d="M12.200 0.600V4.100H15.700" stroke="#707070" stroke-width="1" fill="none"/><path d="M10.300 6.500H14.200" stroke="#33c481" stroke-width="1.300"/><path d="M10.300 8.700H14.200" stroke="#21a366" stroke-width="1.300"/><path d="M10.300 10.800H14.200" stroke="#185c37" stroke-width="1.300"/><rect x="0" y="3.700" width="9.500" height="9" fill="#107c41"/><path d="M2.600 5.600L6.900 10.400M6.900 5.600L2.600 10.400" stroke="#fff" stroke-width="1.600"/></svg>
<span style="left:662px;top:410.75px;font-size:12px;color:#5c5c5c;transform:translateX(0.54px) scaleX(0.9741);">Microsoft Excel W...</span>
<span style="left:825px;top:410.75px;font-size:12px;color:#5c5c5c;transform:translateX(0.19px) scaleX(0.8670);">0 KB</span>
<span style="left:517px;top:410.75px;font-size:12px;color:#5c5c5c;transform:translateX(0.79px) scaleX(0.9744);">8/13/2020 12:34 AM</span>
<svg style="left:437px;top:415.3px;" width="12.4" height="10" viewBox="0 0 12.4 10" preserveAspectRatio="none" fill="none"><path d="M3.300 9.300A2.600 2.600 0 0 1 2.900 4.100A3.600 3.600 0 0 1 9.800 3.600A2.900 2.900 0 0 1 9.400 9.300Z" stroke="#1177d3" stroke-width="1.300" stroke-linejoin="round"/></svg>
<span style="left:198px;top:410.75px;font-size:12px;color:#141414;transform:translateX(0.15px) scaleX(0.9674);">Book 5</span>
<svg style="left:177.8px;top:442.9px;" width="16.4" height="16" viewBox="0 0 16.4 16" preserveAspectRatio="none" fill="none"><path d="M4.900 0.600H12.200L15.700 4.100V14.600A0.800 0.800 0 0 1 14.900 15.400H5.700A0.800 0.800 0 0 1 4.900 14.600Z" fill="#fdfdfd" stroke="#707070" stroke-width="1.150"/><path d="M12.200 0.600V4.100H15.700" stroke="#707070" stroke-width="1" fill="none"/><path d="M10.300 6.500H14.200" stroke="#33c481" stroke-width="1.300"/><path d="M10.300 8.700H14.200" stroke="#21a366" stroke-width="1.300"/><path d="M10.300 10.800H14.200" stroke="#185c37" stroke-width="1.300"/><rect x="0" y="3.700" width="9.500" height="9" fill="#107c41"/><path d="M2.600 5.600L6.900 10.400M6.900 5.600L2.600 10.400" stroke="#fff" stroke-width="1.600"/></svg>
<span style="left:662px;top:441.75px;font-size:12px;color:#5c5c5c;transform:translateX(0.54px) scaleX(0.9741);">Microsoft Excel W...</span>
<span style="left:825px;top:441.75px;font-size:12px;color:#5c5c5c;transform:translateX(0.19px) scaleX(0.8670);">0 KB</span>
<span style="left:517px;top:441.75px;font-size:12px;color:#5c5c5c;transform:translateX(0.79px) scaleX(0.9744);">8/13/2020 12:34 AM</span>
<svg style="left:437px;top:446.3px;" width="12.4" height="10" viewBox="0 0 12.4 10" preserveAspectRatio="none" fill="none"><path d="M3.300 9.300A2.600 2.600 0 0 1 2.900 4.100A3.600 3.600 0 0 1 9.800 3.600A2.900 2.900 0 0 1 9.400 9.300Z" stroke="#1177d3" stroke-width="1.300" stroke-linejoin="round"/></svg>
<span style="left:198px;top:441.75px;font-size:12px;color:#141414;transform:translateX(0.15px) scaleX(0.9680);">Book 6</span>
<svg style="left:177.8px;top:473.9px;" width="16.4" height="16" viewBox="0 0 16.4 16" preserveAspectRatio="none" fill="none"><path d="M4.900 0.600H12.200L15.700 4.100V14.600A0.800 0.800 0 0 1 14.900 15.400H5.700A0.800 0.800 0 0 1 4.900 14.600Z" fill="#fdfdfd" stroke="#707070" stroke-width="1.150"/><path d="M12.200 0.600V4.100H15.700" stroke="#707070" stroke-width="1" fill="none"/><path d="M10.300 6.500H14.200" stroke="#33c481" stroke-width="1.300"/><path d="M10.300 8.700H14.200" stroke="#21a366" stroke-width="1.300"/><path d="M10.300 10.800H14.200" stroke="#185c37" stroke-width="1.300"/><rect x="0" y="3.700" width="9.500" height="9" fill="#107c41"/><path d="M2.600 5.600L6.900 10.400M6.900 5.600L2.600 10.400" stroke="#fff" stroke-width="1.600"/></svg>
<span style="left:662px;top:472.75px;font-size:12px;color:#5c5c5c;transform:translateX(0.54px) scaleX(0.9741);">Microsoft Excel W...</span>
<span style="left:825px;top:472.75px;font-size:12px;color:#5c5c5c;transform:translateX(0.19px) scaleX(0.8670);">0 KB</span>
<span style="left:517px;top:472.75px;font-size:12px;color:#5c5c5c;transform:translateX(0.79px) scaleX(0.9744);">8/13/2020 12:34 AM</span>
<svg style="left:437px;top:477.3px;" width="12.4" height="10" viewBox="0 0 12.4 10" preserveAspectRatio="none" fill="none"><path d="M3.300 9.300A2.600 2.600 0 0 1 2.900 4.100A3.600 3.600 0 0 1 9.800 3.600A2.900 2.900 0 0 1 9.400 9.300Z" stroke="#1177d3" stroke-width="1.300" stroke-linejoin="round"/></svg>
<span style="left:198px;top:472.75px;font-size:12px;color:#141414;transform:translateX(0.15px) scaleX(0.9700);">Book 7</span>
<svg style="left:177.8px;top:504.9px;" width="16.4" height="16" viewBox="0 0 16.4 16" preserveAspectRatio="none" fill="none"><path d="M4.900 0.600H12.200L15.700 4.100V14.600A0.800 0.800 0 0 1 14.900 15.400H5.700A0.800 0.800 0 0 1 4.900 14.600Z" fill="#fdfdfd" stroke="#707070" stroke-width="1.150"/><path d="M12.200 0.600V4.100H15.700" stroke="#707070" stroke-width="1" fill="none"/><path d="M10.300 6.500H14.200" stroke="#33c481" stroke-width="1.300"/><path d="M10.300 8.700H14.200" stroke="#21a366" stroke-width="1.300"/><path d="M10.300 10.800H14.200" stroke="#185c37" stroke-width="1.300"/><rect x="0" y="3.700" width="9.500" height="9" fill="#107c41"/><path d="M2.600 5.600L6.900 10.400M6.900 5.600L2.600 10.400" stroke="#fff" stroke-width="1.600"/></svg>
<span style="left:662px;top:503.75px;font-size:12px;color:#5c5c5c;transform:translateX(0.54px) scaleX(0.9741);">Microsoft Excel W...</span>
<span style="left:825px;top:503.75px;font-size:12px;color:#5c5c5c;transform:translateX(0.19px) scaleX(0.8670);">0 KB</span>
<span style="left:517px;top:503.75px;font-size:12px;color:#5c5c5c;transform:translateX(0.79px) scaleX(0.9744);">8/13/2020 12:34 AM</span>
<svg style="left:437px;top:508.3px;" width="12.4" height="10" viewBox="0 0 12.4 10" preserveAspectRatio="none" fill="none"><path d="M3.300 9.300A2.600 2.600 0 0 1 2.900 4.100A3.600 3.600 0 0 1 9.800 3.600A2.900 2.900 0 0 1 9.400 9.300Z" stroke="#1177d3" stroke-width="1.300" stroke-linejoin="round"/></svg>
<span style="left:198px;top:503.75px;font-size:12px;color:#141414;transform:translateX(0.15px) scaleX(0.9678);">Book 8</span>
<svg style="left:177.8px;top:535.9px;" width="16.4" height="16" viewBox="0 0 16.4 16" preserveAspectRatio="none" fill="none"><path d="M4.900 0.600H12.200L15.700 4.100V14.600A0.800 0.800 0 0 1 14.900 15.400H5.700A0.800 0.800 0 0 1 4.900 14.600Z" fill="#fdfdfd" stroke="#707070" stroke-width="1.150"/><path d="M12.200 0.600V4.100H15.700" stroke="#707070" stroke-width="1" fill="none"/><path d="M10.300 6.500H14.200" stroke="#33c481" stroke-width="1.300"/><path d="M10.300 8.700H14.200" stroke="#21a366" stroke-width="1.300"/><path d="M10.300 10.800H14.200" stroke="#185c37" stroke-width="1.300"/><rect x="0" y="3.700" width="9.500" height="9" fill="#107c41"/><path d="M2.600 5.600L6.900 10.400M6.900 5.600L2.600 10.400" stroke="#fff" stroke-width="1.600"/></svg>
<span style="left:662px;top:534.75px;font-size:12px;color:#5c5c5c;transform:translateX(0.54px) scaleX(0.9741);">Microsoft Excel W...</span>
<span style="left:825px;top:534.75px;font-size:12px;color:#5c5c5c;transform:translateX(0.19px) scaleX(0.8670);">0 KB</span>
<span style="left:517px;top:534.75px;font-size:12px;color:#5c5c5c;transform:translateX(0.79px) scaleX(0.9744);">8/13/2020 12:34 AM</span>
<svg style="left:437px;top:539.3px;" width="12.4" height="10" viewBox="0 0 12.4 10" preserveAspectRatio="none" fill="none"><path d="M3.300 9.300A2.600 2.600 0 0 1 2.900 4.100A3.600 3.600 0 0 1 9.800 3.600A2.900 2.900 0 0 1 9.400 9.300Z" stroke="#1177d3" stroke-width="1.300" stroke-linejoin="round"/></svg>
<span style="left:198px;top:534.75px;font-size:12px;color:#141414;transform:translateX(0.15px) scaleX(0.9691);">Book 9</span>
<svg style="left:177.8px;top:566.9px;" width="16.4" height="16" viewBox="0 0 16.4 16" preserveAspectRatio="none" fill="none"><path d="M4.900 0.600H12.200L15.700 4.100V14.600A0.800 0.800 0 0 1 14.900 15.400H5.700A0.800 0.800 0 0 1 4.900 14.600Z" fill="#fdfdfd" stroke="#707070" stroke-width="1.150"/><path d="M12.200 0.600V4.100H15.700" stroke="#707070" stroke-width="1" fill="none"/><path d="M10.300 6.500H14.200" stroke="#33c481" stroke-width="1.300"/><path d="M10.300 8.700H14.200" stroke="#21a366" stroke-width="1.300"/><path d="M10.300 10.800H14.200" stroke="#185c37" stroke-width="1.300"/><rect x="0" y="3.700" width="9.500" height="9" fill="#107c41"/><path d="M2.600 5.600L6.900 10.400M6.900 5.600L2.600 10.400" stroke="#fff" stroke-width="1.600"/></svg>
<span style="left:662px;top:565.75px;font-size:12px;color:#5c5c5c;transform:translateX(0.54px) scaleX(0.9741);">Microsoft Excel W...</span>
<span style="left:825px;top:565.75px;font-size:12px;color:#5c5c5c;transform:translateX(0.19px) scaleX(0.8670);">0 KB</span>
<span style="left:517px;top:565.75px;font-size:12px;color:#5c5c5c;transform:translateX(0.79px) scaleX(0.9744);">8/13/2020 12:34 AM</span>
<svg style="left:437px;top:570.3px;" width="12.4" height="10" viewBox="0 0 12.4 10" preserveAspectRatio="none" fill="none"><path d="M3.300 9.300A2.600 2.600 0 0 1 2.900 4.100A3.600 3.600 0 0 1 9.800 3.600A2.900 2.900 0 0 1 9.400 9.300Z" stroke="#1177d3" stroke-width="1.300" stroke-linejoin="round"/></svg>
<span style="left:198px;top:565.75px;font-size:12px;color:#141414;transform:translateX(0.15px) scaleX(0.9696);">Book 10</span>
<svg style="left:177.8px;top:597.9px;" width="16.4" height="16" viewBox="0 0 16.4 16" preserveAspectRatio="none" fill="none"><path d="M4.900 0.600H12.200L15.700 4.100V14.600A0.800 0.800 0 0 1 14.900 15.400H5.700A0.800 0.800 0 0 1 4.900 14.600Z" fill="#fdfdfd" stroke="#707070" stroke-width="1.150"/><path d="M12.200 0.600V4.100H15.700" stroke="#707070" stroke-width="1" fill="none"/><path d="M10.300 6.500H14.200" stroke="#33c481" stroke-width="1.300"/><path d="M10.300 8.700H14.200" stroke="#21a366" stroke-width="1.300"/><path d="M10.300 10.800H14.200" stroke="#185c37" stroke-width="1.300"/><rect x="0" y="3.700" width="9.500" height="9" fill="#107c41"/><path d="M2.600 5.600L6.900 10.400M6.900 5.600L2.600 10.400" stroke="#fff" stroke-width="1.600"/></svg>
<span style="left:662px;top:596.75px;font-size:12px;color:#5c5c5c;transform:translateX(0.54px) scaleX(0.9741);">Microsoft Excel W...</span>
<span style="left:825px;top:596.75px;font-size:12px;color:#5c5c5c;transform:translateX(0.19px) scaleX(0.8670);">0 KB</span>
<span style="left:517px;top:596.75px;font-size:12px;color:#5c5c5c;transform:translateX(0.79px) scaleX(0.9744);">8/13/2020 12:34 AM</span>
<svg style="left:437px;top:601.3px;" width="12.4" height="10" viewBox="0 0 12.4 10" preserveAspectRatio="none" fill="none"><path d="M3.300 9.300A2.600 2.600 0 0 1 2.900 4.100A3.600 3.600 0 0 1 9.800 3.600A2.900 2.900 0 0 1 9.400 9.300Z" stroke="#1177d3" stroke-width="1.300" stroke-linejoin="round"/></svg>
<span style="left:198px;top:596.75px;font-size:12px;color:#141414;transform:translateX(0.14px) scaleX(0.9739);">Book 11</span>
<svg style="left:177.8px;top:628.9px;" width="16.4" height="16" viewBox="0 0 16.4 16" preserveAspectRatio="none" fill="none"><path d="M4.900 0.600H12.200L15.700 4.100V14.600A0.800 0.800 0 0 1 14.900 15.400H5.700A0.800 0.800 0 0 1 4.900 14.600Z" fill="#fdfdfd" stroke="#707070" stroke-width="1.150"/><path d="M12.200 0.600V4.100H15.700" stroke="#707070" stroke-width="1" fill="none"/><path d="M10.300 6.500H14.200" stroke="#33c481" stroke-width="1.300"/><path d="M10.300 8.700H14.200" stroke="#21a366" stroke-width="1.300"/><path d="M10.300 10.800H14.200" stroke="#185c37" stroke-width="1.300"/><rect x="0" y="3.700" width="9.500" height="9" fill="#107c41"/><path d="M2.600 5.600L6.900 10.400M6.900 5.600L2.600 10.400" stroke="#fff" stroke-width="1.600"/></svg>
<span style="left:662px;top:627.75px;font-size:12px;color:#5c5c5c;transform:translateX(0.54px) scaleX(0.9741);">Microsoft Excel W...</span>
<span style="left:825px;top:627.75px;font-size:12px;color:#5c5c5c;transform:translateX(0.19px) scaleX(0.8670);">0 KB</span>
<span style="left:517px;top:627.75px;font-size:12px;color:#5c5c5c;transform:translateX(0.79px) scaleX(0.9744);">8/13/2020 12:34 AM</span>
<svg style="left:437px;top:632.3px;" width="12.4" height="10" viewBox="0 0 12.4 10" preserveAspectRatio="none" fill="none"><path d="M3.300 9.300A2.600 2.600 0 0 1 2.900 4.100A3.600 3.600 0 0 1 9.800 3.600A2.900 2.900 0 0 1 9.400 9.300Z" stroke="#1177d3" stroke-width="1.300" stroke-linejoin="round"/></svg>
<span style="left:198px;top:627.75px;font-size:12px;color:#141414;transform:translateX(0.14px) scaleX(0.9727);">Book 12</span>
<div style="left:429.5px;top:133.5px;width:187.5px;height:363px;background:#d9d9d9;border-radius:8px;box-shadow:0 8px 16px rgba(0,0,0,0.14),0 0 3px rgba(0,0,0,0.10);"></div>
<div style="left:434px;top:429px;width:179px;height:28px;background:#cfcfcf;border-radius:4px;"></div>
<div style="left:430px;top:393px;width:187px;height:1px;background:#c6c6c6;"></div>
<div style="left:430px;top:460px;width:187px;height:1px;background:#c6c6c6;"></div>
<span style="left:501px;top:141.75px;font-size:14px;color:#1c1c1c;transform:translateX(0.30px) scaleX(0.9598);opacity:.999;">Extra large icons</span>
<span style="left:501px;top:173.75px;font-size:14px;color:#1c1c1c;transform:translateX(0.30px) scaleX(0.9599);opacity:.999;">Large icons</span>
<span style="left:501px;top:205.75px;font-size:14px;color:#1c1c1c;transform:translateX(0.24px) scaleX(1.0092);opacity:.999;">Medium icons</span>
<span style="left:501px;top:237.75px;font-size:14px;color:#1c1c1c;transform:translateX(0.59px) scaleX(0.9538);opacity:.999;">Small icons</span>
<span style="left:501px;top:269.75px;font-size:14px;color:#1c1c1c;transform:translateX(0.35px) scaleX(0.9150);opacity:.999;">List</span>
<span style="left:501px;top:301.75px;font-size:14px;color:#1c1c1c;transform:translateX(0.29px) scaleX(0.9625);opacity:.999;">Details</span>
<span style="left:501px;top:333.75px;font-size:14px;color:#1c1c1c;transform:translateX(0.21px) scaleX(0.9247);opacity:.999;">Tiles</span>
<span style="left:501px;top:365.75px;font-size:14px;color:#1c1c1c;transform:translateX(0.29px) scaleX(0.9972);opacity:.999;">Content</span>
<span style="left:501px;top:401.00px;font-size:14px;color:#1c1c1c;transform:translateX(0.28px) scaleX(0.9795);opacity:.999;">Details pane</span>
<span style="left:501px;top:433.00px;font-size:14px;color:#1c1c1c;transform:translateX(0.29px) scaleX(0.9680);opacity:.999;">Preview pane</span>
<span style="left:501px;top:468.00px;font-size:14px;color:#1c1c1c;transform:translateX(0.59px) scaleX(0.9527);opacity:.999;">Show</span>
<svg style="left:448.4px;top:309.4px;" width="5" height="5" viewBox="0 0 5 5" preserveAspectRatio="none" fill="none"><circle cx="2.500" cy="2.500" r="2.200" fill="#555"/></svg>
<svg style="left:448.4px;top:408.4px;" width="5" height="5" viewBox="0 0 5 5" preserveAspectRatio="none" fill="none"><circle cx="2.500" cy="2.500" r="2.200" fill="#555"/></svg>
<svg style="left:473.5px;top:145px;" width="15" height="14" viewBox="0 0 15 14" preserveAspectRatio="none" fill="none"><rect x="0.600" y="0.700" width="12.800" height="10" rx="2" stroke="#3d3d3d" stroke-width="1"/><path d="M2.500 13.300H11.500" stroke="#3d3d3d" stroke-width="1"/></svg>
<svg style="left:474.5px;top:178px;" width="13" height="13" viewBox="0 0 13 13" preserveAspectRatio="none" fill="none"><rect x="0.600" y="0.700" width="10.800" height="8.500" rx="1.800" stroke="#3d3d3d" stroke-width="1"/><path d="M0.600 11.700H11.400" stroke="#3d3d3d" stroke-width="1"/></svg>
<svg style="left:476px;top:210px;" width="11" height="13" viewBox="0 0 11 13" preserveAspectRatio="none" fill="none"><rect x="0.600" y="0.600" width="8.600" height="6.600" rx="1.800" stroke="#3d3d3d" stroke-width="1"/><path d="M1.200 9.300H8.800M1.200 11.500H8.800" stroke="#3d3d3d" stroke-width="0.900"/></svg>
<svg style="left:474px;top:241.5px;" width="14.4" height="14" viewBox="0 0 14.4 14" preserveAspectRatio="none" fill="none"><rect x="0.600" y="0.600" width="5.200" height="4.900" rx="1.800" stroke="#3d3d3d" stroke-width="1"/><rect x="8.200" y="0.600" width="5.200" height="4.900" rx="1.800" stroke="#3d3d3d" stroke-width="1"/><rect x="0.600" y="8" width="5.200" height="4.900" rx="1.800" stroke="#3d3d3d" stroke-width="1"/><rect x="8.200" y="8" width="5.200" height="4.900" rx="1.800" stroke="#3d3d3d" stroke-width="1"/></svg>
<svg style="left:472.6px;top:274.5px;" width="17" height="11" viewBox="0 0 17 11" preserveAspectRatio="none" fill="none"><path d="M0 0.700H7M0 3.700H7M0 6.700H7M0 9.700H7M9.700 0.700H16.700M9.700 3.700H16.700M9.700 6.700H16.700M9.700 9.700H16.700" stroke="#3d3d3d" stroke-width="0.900"/></svg>
<svg style="left:472.6px;top:307px;" width="17" height="11" viewBox="0 0 17 11" preserveAspectRatio="none" fill="none"><path d="M0 0.700H16.700M0 3.700H16.700M0 6.700H16.700M0 9.700H16.700" stroke="#3d3d3d" stroke-width="0.900"/></svg>
<svg style="left:472.6px;top:338px;" width="17" height="12" viewBox="0 0 17 12" preserveAspectRatio="none" fill="none"><ellipse cx="3.300" cy="2.800" rx="2.600" ry="2.100" stroke="#3d3d3d" stroke-width="0.900"/><ellipse cx="3.300" cy="9.300" rx="2.600" ry="2.100" stroke="#3d3d3d" stroke-width="0.900"/><path d="M8.500 2.500H16.500M8.500 9.300H16.500" stroke="#3d3d3d" stroke-width="0.900"/></svg>
<svg style="left:473.6px;top:369px;" width="15" height="14" viewBox="0 0 15 14" preserveAspectRatio="none" fill="none"><ellipse cx="2.700" cy="2" rx="2.100" ry="1.500" stroke="#3d3d3d" stroke-width="0.900"/><ellipse cx="2.700" cy="6.800" rx="2.100" ry="1.500" stroke="#3d3d3d" stroke-width="0.900"/><ellipse cx="2.700" cy="11.600" rx="2.100" ry="1.500" stroke="#3d3d3d" stroke-width="0.900"/><path d="M7 1.800H14.300M7 6.800H14.300M7 11.700H14.300" stroke="#3d3d3d" stroke-width="0.900"/></svg>
<svg style="left:472.9px;top:405.1px;" width="16" height="12" viewBox="0 0 16 12" preserveAspectRatio="none" fill="none"><rect x="0.550" y="0.550" width="14.900" height="10.900" rx="2.800" fill="#fbfbfb" stroke="#4a4a4a" stroke-width="1.100"/><path d="M9.300 0.550H12.650A2.800 2.800 0 0 1 15.450 3.350V8.650A2.800 2.800 0 0 1 12.650 11.450H9.300Z" fill="#fdfdfd" stroke="#0f78d4" stroke-width="1.100"/><path d="M11.100 4.300H13.900M11.100 6.350H13.900M11.100 8.400H13.900" stroke="#0f78d4" stroke-width="0.950" stroke-linecap="round"/></svg>
<svg style="left:472.9px;top:437.1px;" width="16" height="12" viewBox="0 0 16 12" preserveAspectRatio="none" fill="none"><rect x="0.550" y="0.550" width="14.900" height="10.900" rx="2.800" fill="#fbfbfb" stroke="#4a4a4a" stroke-width="1.100"/><path d="M9.300 0.550H12.650A2.800 2.800 0 0 1 15.450 3.350V8.650A2.800 2.800 0 0 1 12.650 11.450H9.300Z" fill="#fdfdfd" stroke="#0f78d4" stroke-width="1.100"/></svg>
<svg style="left:593.5px;top:474.2px;" width="5" height="8.4" viewBox="0 0 5 8.4" preserveAspectRatio="none" fill="none"><path d="M0.600 0.600L4.4 4.2L0.600 7.800000000000001" stroke="#3d3d3d" stroke-width="1" stroke-linecap="round" stroke-linejoin="round"/></svg>
</div></body></html>
